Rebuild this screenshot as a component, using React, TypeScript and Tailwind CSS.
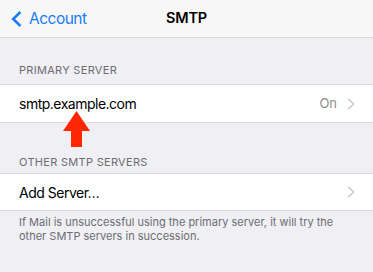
import React from "react";

const font = { fontFamily: '"Inter", "Liberation Sans", sans-serif' };

function Chevron() {
  return (
    <svg width="8" height="12" viewBox="0 0 8 12" className="ml-[10px]">
      <path d="M1.2 1l5.3 5-5.3 5" fill="none" stroke="#c7c7cc" strokeWidth="1.5" />
    </svg>
  );
}

export default function App() {
  return (
    <div className="h-[272px] w-[373px] overflow-hidden bg-[#efeff4]" style={font}>
      <div className="relative flex h-[38px] items-center border-b border-[#d8d8dc] bg-[#f7f7f8]">
        <div className="flex items-center pl-[11px] text-[#1a7cf5]">
          <svg width="11" height="16" viewBox="0 0 11 16">
            <path d="M9.4 1L2.2 8l7.2 7" fill="none" stroke="#1a7cf5" strokeWidth="2.5" />
          </svg>
          <span className="ml-[7px] text-[15.5px] leading-none tracking-[-0.5px]">Account</span>
        </div>
        <div className="absolute left-1/2 -translate-x-1/2 text-[14.5px] font-semibold leading-none tracking-[-0.2px] text-black">
          SMTP
        </div>
      </div>

      <div className="h-[46px] pl-[19px] pt-[27px] text-[11px] leading-none tracking-[0.3px] text-[#6d6d72]">PRIMARY SERVER</div>
      <div className="flex h-[39px] items-center border-y border-[#dcdce0] bg-white pl-[19px] pr-[18px]">
        <span className="flex-1 text-[14px] tracking-[-0.5px] text-black">smtp.example.com</span>
        <span className="text-[13px] text-[#8e8e93]">On</span>
        <Chevron />
      </div>
      <div className="relative h-[50px] pl-[19px] pt-[34px] text-[11px] leading-none tracking-[0.3px] text-[#6d6d72]">
        <svg className="absolute left-[63px] top-[-12px]" width="27" height="36" viewBox="0 0 27 36">
          <polygon points="13.5,0 27,20 19,20 19,36 8,36 8,20 0,20" fill="#ff2600" />
        </svg>
        OTHER SMTP SERVERS
      </div>
      <div className="flex h-[38px] items-center border-y border-[#dcdce0] bg-white pl-[19px] pr-[18px]">
        <span className="flex-1 text-[14px] tracking-[-0.5px] text-black">Add Server…</span>
        <Chevron />
      </div>
      <p className="pl-[19px] pr-[34px] pt-[4px] text-[11px] leading-[14px] text-[#6d6d72]">
        If Mail is unsuccessful using the primary server, it will try the other SMTP servers in succession.
      </p>
    </div>
  );
}
